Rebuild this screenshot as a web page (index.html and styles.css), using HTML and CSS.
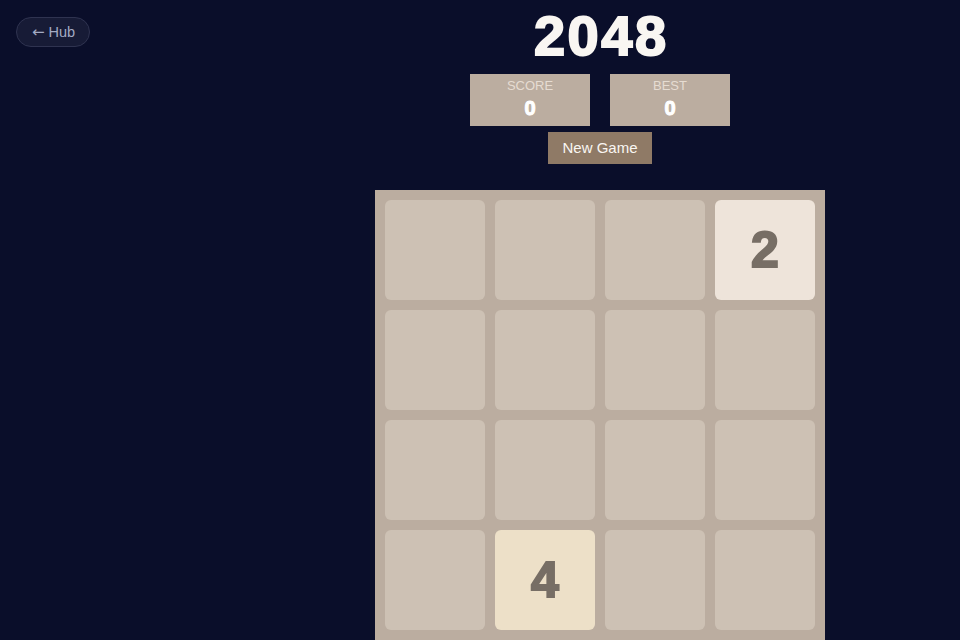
FILE: index.html
```html
<!DOCTYPE html>
<html lang="en">
<head>
<meta charset="utf-8">
<title>2048</title>
<link rel="stylesheet" href="styles.css">
</head>
<body>
<div class="page">
  <aside class="side">
    <a class="hub" href="#"><span class="arrow">←</span> Hub</a>
  </aside>
  <main class="game">
    <h1 class="title">2048</h1>
    <div class="scores">
      <div class="score-box">
        <div class="score-label">SCORE</div>
        <div class="score-value">0</div>
      </div>
      <div class="score-box">
        <div class="score-label">BEST</div>
        <div class="score-value">0</div>
      </div>
    </div>
    <button class="new-game">New Game</button>
    <div class="board">
      <div class="cell"></div>
      <div class="cell"></div>
      <div class="cell"></div>
      <div class="cell tile-2">2</div>
      <div class="cell"></div>
      <div class="cell"></div>
      <div class="cell"></div>
      <div class="cell"></div>
      <div class="cell"></div>
      <div class="cell"></div>
      <div class="cell"></div>
      <div class="cell"></div>
      <div class="cell"></div>
      <div class="cell tile-4">4</div>
      <div class="cell"></div>
      <div class="cell"></div>
    </div>
  </main>
</div>
</body>
</html>
```

FILE: styles.css
```css
html, body {
  margin: 0;
  padding: 0;
  background: #0a0e2a;
  font-family: "Liberation Sans", Arial, sans-serif;
  overflow: hidden;
}

.page {
  display: flex;
  width: 960px;
  height: 640px;
}

.side {
  width: 240px;
  padding: 17px 16px;
  box-sizing: border-box;
  flex: none;
}

.hub {
  display: inline-flex;
  align-items: center;
  gap: 4px;
  width: 74px;
  height: 30px;
  padding: 0 0 0 15px;
  box-sizing: border-box;
  border: 1px solid #2f3350;
  border-radius: 15px;
  background: #171b36;
  color: #a3abc4;
  font-size: 14.5px;
  text-decoration: none;
}

.arrow {
  font-family: "DejaVu Sans", sans-serif;
  font-size: 15px;
  line-height: 14px;
}

.game {
  width: 720px;
  flex: none;
  display: flex;
  flex-direction: column;
  align-items: center;
}

.title {
  margin: 6px 0 0;
  font-size: 56px;
  line-height: 60px;
  font-weight: bold;
  color: #f9f6f2;
  letter-spacing: 2.5px;
  text-indent: 2.5px;
  -webkit-text-stroke: 2px #f9f6f2;
}

.scores {
  display: flex;
  gap: 20px;
  margin-top: 8px;
}

.score-box {
  width: 120px;
  height: 52px;
  box-sizing: border-box;
  padding: 4px 0 6px;
  background: #bbada0;
  text-align: center;
}

.score-label {
  font-size: 13px;
  line-height: 16px;
  color: #e6dcd2;
}

.score-value {
  margin-top: 2px;
  font-size: 20px;
  line-height: 24px;
  font-weight: bold;
  color: #ffffff;
  -webkit-text-stroke: 1px #ffffff;
}

.new-game {
  margin-top: 6px;
  width: 104px;
  height: 32px;
  padding: 0;
  border: none;
  border-radius: 0;
  background: #8f7a66;
  color: #f9f6f2;
  font-family: "Liberation Sans", Arial, sans-serif;
  font-size: 15px;
  line-height: 32px;
}

.board {
  margin-top: 26px;
  width: 450px;
  height: 450px;
  box-sizing: border-box;
  padding: 10px;
  background: #bbada0;
  display: grid;
  grid-template-columns: repeat(4, 100px);
  grid-template-rows: repeat(4, 100px);
  gap: 10px;
  flex: none;
}

.cell {
  border-radius: 6px;
  background: #cdc1b4;
  display: flex;
  align-items: center;
  justify-content: center;
  font-size: 50px;
  font-weight: bold;
  color: #776e65;
  -webkit-text-stroke: 2px #776e65;
}

.tile-2 {
  background: #eee4da;
}

.tile-4 {
  background: #ede0c8;
}
```
